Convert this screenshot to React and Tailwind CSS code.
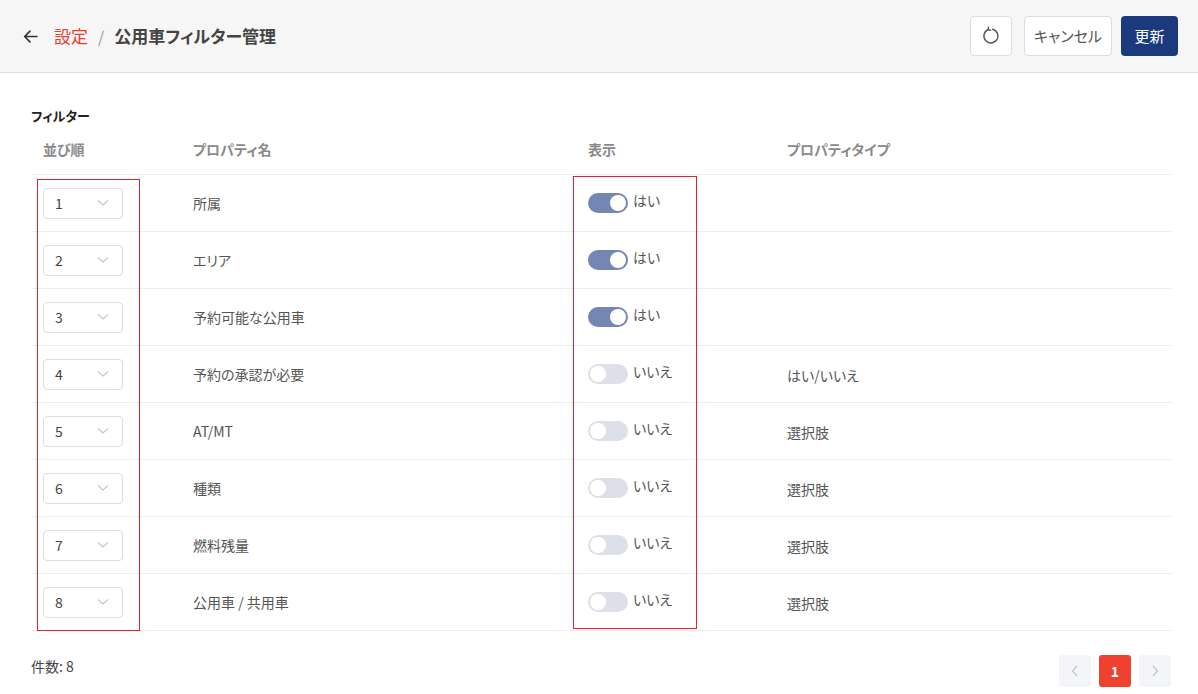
import React from "react";

const rows = [
  { order: 1, name: "所属", on: true, type: "" },
  { order: 2, name: "エリア", on: true, type: "" },
  { order: 3, name: "予約可能な公用車", on: true, type: "" },
  { order: 4, name: "予約の承認が必要", on: false, type: "はい/いいえ" },
  { order: 5, name: "AT/MT", on: false, type: "選択肢" },
  { order: 6, name: "種類", on: false, type: "選択肢" },
  { order: 7, name: "燃料残量", on: false, type: "選択肢" },
  { order: 8, name: "公用車 / 共用車", on: false, type: "選択肢" },
];

function Toggle({ on }) {
  return (
    <div className="flex items-center gap-[5px]">
      <div
        className={
          "w-[40px] h-[20px] rounded-full flex items-center px-[2px] " +
          (on ? "bg-[#7487b4] justify-end" : "bg-[#dde0e8] justify-start")
        }
      >
        <div className="w-[16px] h-[16px] rounded-full bg-white" />
      </div>
      <span className="text-[14px] text-[#555] -mt-[5px]">{on ? "はい" : "いいえ"}</span>
    </div>
  );
}

export default function App() {
  return (
    <div
      className="w-[1198px] h-[694px] bg-white overflow-hidden relative [font-feature-settings:'palt']"
      style={{ fontFamily: '"Noto Sans CJK JP", "Noto Sans", sans-serif' }}
    >
      {/* header */}
      <div className="h-[73px] bg-[#f6f6f6] border-b border-[#dcdce4] flex items-center justify-between pl-[22px] pr-[20px]">
        <div className="flex items-center">
          <svg width="17" height="17" viewBox="0 0 16 16" fill="none" stroke="#333" strokeWidth="1.6" strokeLinecap="round" strokeLinejoin="round">
            <path d="M14 8H2.5M7.5 3L2.5 8l5 5" />
          </svg>
          <span className="ml-[15px] text-[17px] text-[#ee3b2b]">設定</span>
          <span className="mx-[10px] text-[16px] text-[#999]">/</span>
          <span className="text-[17px] font-bold text-[#444]">公用車フィルター管理</span>
        </div>
        <div className="flex items-center">
          <button className="w-[42px] h-[40px] bg-white border border-[#dcdce4] rounded-[4px] flex items-center justify-center">
            <svg width="20" height="20" viewBox="0 0 20 20" fill="none" stroke="#555" strokeWidth="1.4" strokeLinecap="round" strokeLinejoin="round">
              <path d="M11.6 3.2A7 7 0 1 1 7.3 3.5" />
              <path d="M7.4 1.2L7.3 3.5L9.6 4.3" />
            </svg>
          </button>
          <button className="ml-[12px] w-[88px] h-[40px] bg-white border border-[#dcdce4] rounded-[4px] text-[15px] text-[#555]">
            キャンセル
          </button>
          <button className="ml-[9px] w-[57px] h-[40px] bg-[#1b3a7d] rounded-[4px] text-[15px] text-white">
            更新
          </button>
        </div>
      </div>

      {/* content */}
      <div className="pl-[31px] pr-[27px] pt-[33px]">
        <div className="text-[13px] font-bold text-[#222] leading-[20px]">フィルター</div>
        <div className="grid grid-cols-[150px_395px_199px_1fr] h-[49px] items-center border-b border-[#ebebf2] text-[14px] font-bold text-[#8a8a8a] pb-[1px]">
          <div className="pl-[12px]">並び順</div>
          <div className="pl-[12px]">プロパティ名</div>
          <div className="pl-[12px]">表示</div>
          <div className="pl-[12px]">プロパティタイプ</div>
        </div>
        {rows.map((r) => (
          <div
            key={r.order}
            className="grid grid-cols-[150px_395px_199px_1fr] h-[57px] items-center border-b border-[#ebebf2] text-[14px] text-[#555]"
          >
            <div className="pl-[12px]">
              <div className="w-[80px] h-[31px] border border-[#dcdce4] rounded-[4px] flex items-center justify-between pl-[11px] pr-[13px]">
                <span className="text-[14px] text-[#444]">{r.order}</span>
                <svg width="12" height="8" viewBox="0 0 12 8" fill="none" stroke="#c4c4cc" strokeWidth="1.1">
                  <path d="M1 1.5l5 4.5 5-4.5" />
                </svg>
              </div>
            </div>
            <div className="pl-[12px]">{r.name}</div>
            <div className="pl-[12px]">
              <Toggle on={r.on} />
            </div>
            <div className="pl-[12px] pt-[2px]">{r.type}</div>
          </div>
        ))}

        <div className="flex items-center justify-between mt-[24px]">
          <div className="text-[14px] text-[#444] -mt-[10px]">件数: 8</div>
          <div className="flex items-center gap-[8px]">
            <div className="w-[32px] h-[32px] rounded-[3px] bg-[#f4f5f9] flex items-center justify-center">
              <svg width="8" height="12" viewBox="0 0 8 12" fill="none" stroke="#c4c4cc" strokeWidth="1.2">
                <path d="M6 1L1.5 6 6 11" />
              </svg>
            </div>
            <div className="w-[32px] h-[32px] rounded-[3px] bg-[#ef4130] flex items-center justify-center text-white font-bold text-[14px]">
              1
            </div>
            <div className="w-[32px] h-[32px] rounded-[3px] bg-[#f4f5f9] flex items-center justify-center">
              <svg width="8" height="12" viewBox="0 0 8 12" fill="none" stroke="#c4c4cc" strokeWidth="1.2">
                <path d="M2 1l4.5 5L2 11" />
              </svg>
            </div>
          </div>
        </div>
      </div>

      {/* annotation frames */}
      <div className="absolute left-[37px] top-[179px] w-[103px] h-[452px] border border-[#e8202a] pointer-events-none" />
      <div className="absolute left-[573px] top-[176px] w-[124px] h-[453px] border border-[#e8202a] pointer-events-none" />
    </div>
  );
}
